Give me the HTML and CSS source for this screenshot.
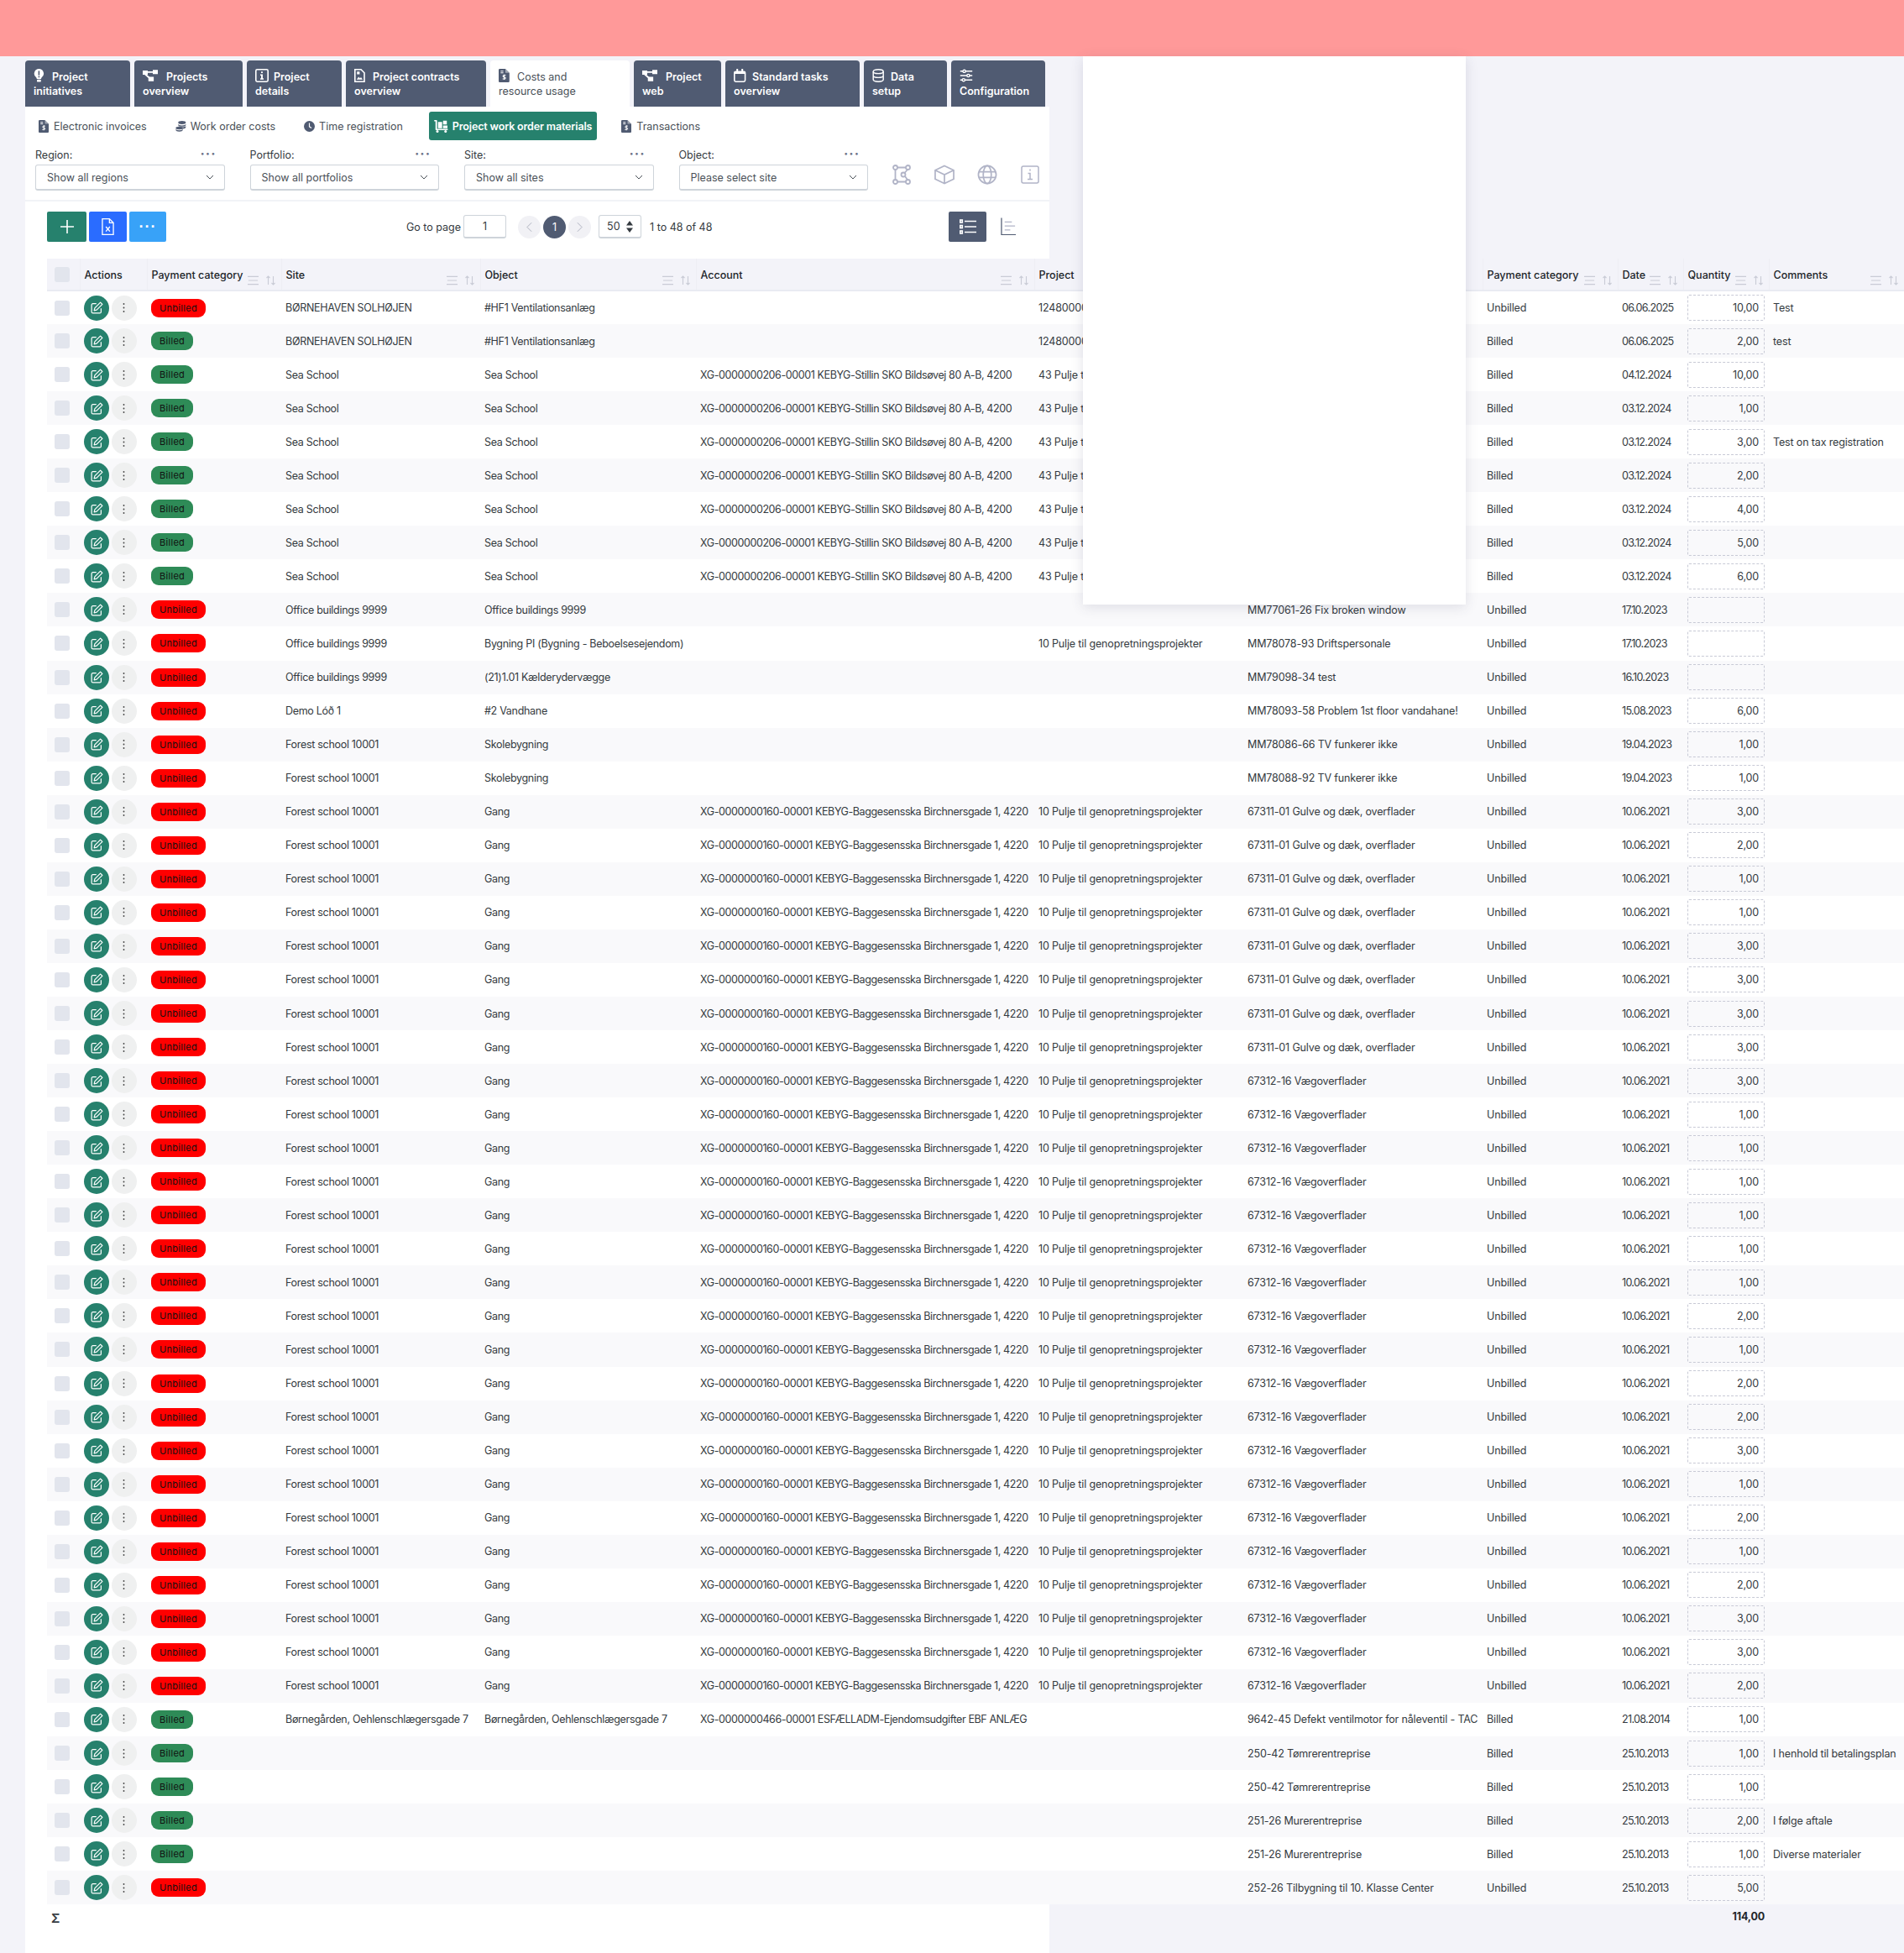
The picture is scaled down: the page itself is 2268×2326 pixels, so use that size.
FILE: index.html
```html
<!DOCTYPE html>
<html lang="en">
<head>
    <meta charset="UTF-8">
    <title>Project work order materials</title>
    <link rel="stylesheet" href="styles.css">
</head>
<body>
    <svg class="sprite" xmlns="http://www.w3.org/2000/svg">
        <symbol id="i-bulb" viewBox="0 0 16 20" preserveAspectRatio="xMinYMid"><path fill="currentColor" d="M8 0a7 7 0 0 0-4.600 12.300c.8.800 1.300 1.700 1.400 2.700h6.400c.1-1 .6-1.900 1.400-2.700A7 7 0 0 0 8 0z"/><rect x="5" y="16" width="6" height="3.500" rx="1.200" fill="currentColor"/><rect x="7" y="3" width="2" height="6.500" fill="#505b72"/><rect x="7" y="10.800" width="2" height="2" fill="#505b72"/></symbol>
        <symbol id="i-net" viewBox="0 0 24 18" preserveAspectRatio="xMinYMid"><path fill="currentColor" d="M0 1h8v6.500H0zM16 0h8v6.500h-8zM9 11h8.500v7H9z"/><path stroke="currentColor" stroke-width="2.400" fill="none" d="M8 3.500h8M4 7l7 6"/></symbol>
        <symbol id="i-info" viewBox="0 0 20 20" preserveAspectRatio="xMinYMid"><rect x="1" y="1" width="18" height="18" rx="2" fill="none" stroke="currentColor" stroke-width="2"/><path fill="currentColor" d="M8.800 4h2.400v2.400H8.800zM7.500 8h3.700v6h1.300v2h-5v-2h1.300v-4H7.500z"/></symbol>
        <symbol id="i-doc" viewBox="0 0 16 20" preserveAspectRatio="xMinYMid"><path d="M1 1h9l5 5v13H1z" fill="none" stroke="currentColor" stroke-width="2"/><path fill="currentColor" d="M4 4h4v4H4zM3.500 16l3-4 2 2 1.500-1.500 2.500 3.500z"/></symbol>
        <symbol id="i-invoice" viewBox="0 0 16 20" preserveAspectRatio="xMinYMid"><path fill="currentColor" d="M1.500 0H10l6 6v12.500a1.500 1.500 0 0 1-1.500 1.500h-13A1.500 1.500 0 0 1 0 18.500v-17A1.500 1.500 0 0 1 1.500 0z"/><path stroke="#fff" stroke-width="1.300" fill="none" d="M3 3.500h4M3 6h4M10.500 9.500H7.800a1.300 1.300 0 0 0 0 2.800h1a1.300 1.300 0 0 1 0 2.800H5.800M8.300 8.300v8"/><path fill="#fff" d="M10 0v6h6z" opacity=".45"/></symbol>
        <symbol id="i-cal" viewBox="0 0 18 20" preserveAspectRatio="xMinYMid"><rect x="1" y="4" width="16" height="15" rx="2" fill="none" stroke="currentColor" stroke-width="2"/><path fill="currentColor" d="M1 4h16v3.500H1zM4 0h2.500v5H4zM11.500 0H14v5h-2.500z"/></symbol>
        <symbol id="i-db" viewBox="0 0 18 20" preserveAspectRatio="xMinYMid" fill="none" stroke="currentColor" stroke-width="1.800"><ellipse cx="9" cy="4" rx="7.500" ry="3"/><path d="M1.500 4v12c0 1.700 3.400 3 7.500 3s7.500-1.300 7.500-3V4M1.500 10c0 1.700 3.400 3 7.500 3s7.500-1.300 7.500-3"/></symbol>
        <symbol id="i-sliders" viewBox="0 0 20 20" preserveAspectRatio="xMinYMid" fill="none" stroke="currentColor" stroke-width="1.800"><path d="M1 3.500h4M9 3.500h10M1 10h10M15 10h4M1 16.500h3M8 16.500h11"/><circle cx="7" cy="3.500" r="2"/><circle cx="13" cy="10" r="2"/><circle cx="6" cy="16.500" r="2"/></symbol>
        <symbol id="i-coins" viewBox="0 0 20 20"><g fill="currentColor"><ellipse cx="12" cy="3" rx="7" ry="3"/><path d="M5 5.500c0 1.700 3 3 7 3s7-1.300 7-3v2c0 1.700-3 3-7 3s-7-1.300-7-3zM5 9.500c1 .8 3 2 7 2s6-1.200 7-2v2c0 1.700-3 3-7 3s-4-.2-4-.2z"/><ellipse cx="7" cy="13" rx="6.500" ry="2.600"/><path d="M.5 14.500c0 1.500 3 2.700 6.500 2.700s6.500-1.200 6.500-2.700v2.200c0 1.700-3 3-6.500 3s-6.500-1.300-6.500-3z"/></g></symbol>
        <symbol id="i-clock" viewBox="0 0 20 20"><circle cx="10" cy="10" r="10" fill="currentColor"/><path d="M10 4v6.500l4 2.500" fill="none" stroke="#fff" stroke-width="1.800"/></symbol>
        <symbol id="i-dolly" viewBox="0 0 22 20"><g fill="currentColor"><path d="M0 0h3.500a1 1 0 0 1 1 1v13h17v2H3a1 1 0 0 1-1-1V2H0z"/><path d="M6 3h6.500v10H6zM14 1h6v6h-6zM14 8.500h7V13h-7z"/><circle cx="5" cy="18" r="2"/><circle cx="18" cy="18" r="2"/></g></symbol>
        <symbol id="i-edit" viewBox="0 0 20 20" fill="none" stroke="currentColor" stroke-width="1.600" stroke-linejoin="round"><path d="M9 3.500H3.500a2 2 0 0 0-2 2v11a2 2 0 0 0 2 2h11a2 2 0 0 0 2-2V11"/><path d="M15.500 1.500l3 3L9.500 13.500l-4 1 1-4z"/></symbol>
        <symbol id="i-chev" viewBox="0 0 10 6"><path d="M1 1l4 4 4-4" fill="none" stroke="currentColor" stroke-width="1"/></symbol>
        <symbol id="i-menu" viewBox="0 0 14 12"><path d="M0 1h14M1 6h12M0 11h14" stroke="currentColor" stroke-width="1.200"/></symbol>
        <symbol id="i-sort" viewBox="0 0 12 12"><path d="M3 11V1M1 3l2-2 2 2M9 1v10M7 9l2 2 2-2" fill="none" stroke="currentColor" stroke-width="1.100"/></symbol>
    </svg>

    <div class="topbar"></div>

    <div class="page">
        <nav class="tabs">
            <a class="tab"><svg class="tab-icon"><use href="#i-bulb"/></svg>Project<br>initiatives</a>
            <a class="tab"><svg class="tab-icon tab-icon-wide"><use href="#i-net"/></svg>Projects<br>overview</a>
            <a class="tab"><svg class="tab-icon"><use href="#i-info"/></svg>Project<br>details</a>
            <a class="tab"><svg class="tab-icon"><use href="#i-doc"/></svg>Project contracts<br>overview</a>
            <a class="tab tab-active"><svg class="tab-icon"><use href="#i-invoice"/></svg>Costs and<br>resource usage</a>
            <a class="tab"><svg class="tab-icon tab-icon-wide"><use href="#i-net"/></svg>Project<br>web</a>
            <a class="tab"><svg class="tab-icon"><use href="#i-cal"/></svg>Standard tasks<br>overview</a>
            <a class="tab"><svg class="tab-icon"><use href="#i-db"/></svg>Data<br>setup</a>
            <a class="tab"><svg class="tab-icon"><use href="#i-sliders"/></svg><br>Configuration</a>
        </nav>

        <main class="panel">
            <nav class="subtabs">
                <a class="subtab"><svg class="sub-icon"><use href="#i-invoice"/></svg>Electronic invoices</a>
                <a class="subtab"><svg class="sub-icon"><use href="#i-coins"/></svg>Work order costs</a>
                <a class="subtab"><svg class="sub-icon"><use href="#i-clock"/></svg>Time registration</a>
                <a class="subtab subtab-active"><svg class="sub-icon sub-icon-wide"><use href="#i-dolly"/></svg>Project work order materials</a>
                <a class="subtab"><svg class="sub-icon"><use href="#i-invoice"/></svg>Transactions</a>
            </nav>

            <section class="filters">
                <div class="filter">
                    <div class="filter-label"><span>Region:</span><span class="more">&middot;&middot;&middot;</span></div>
                    <div class="select"><span>Show all regions</span><svg class="chev"><use href="#i-chev"/></svg></div>
                </div>
                <div class="filter">
                    <div class="filter-label"><span>Portfolio:</span><span class="more">&middot;&middot;&middot;</span></div>
                    <div class="select"><span>Show all portfolios</span><svg class="chev"><use href="#i-chev"/></svg></div>
                </div>
                <div class="filter">
                    <div class="filter-label"><span>Site:</span><span class="more">&middot;&middot;&middot;</span></div>
                    <div class="select"><span>Show all sites</span><svg class="chev"><use href="#i-chev"/></svg></div>
                </div>
                <div class="filter">
                    <div class="filter-label"><span>Object:</span><span class="more">&middot;&middot;&middot;</span></div>
                    <div class="select"><span>Please select site</span><svg class="chev"><use href="#i-chev"/></svg></div>
                </div>
                <div class="view-icons">
                    <svg viewBox="0 0 22 24" fill="none" stroke="currentColor" stroke-width="1.800"><circle cx="3.500" cy="3.500" r="2.500"/><circle cx="18.500" cy="3.500" r="2.500"/><circle cx="3.500" cy="20.500" r="2.500"/><circle cx="18.500" cy="20.500" r="2.500"/><circle cx="13" cy="12" r="2.500"/><path d="M6 3.500h10M3.500 6v12M6 20.500h10M18 6l-3.500 4M15 14l3 4"/></svg>
                    <svg viewBox="0 0 25 24" fill="none" stroke="currentColor" stroke-width="1.800"><path d="M12.500 1L24 6.500v11L12.500 23 1 17.500v-11zM1 6.500l11.500 5.500L24 6.500M12.500 12v11"/></svg>
                    <svg viewBox="0 0 25 24" fill="none" stroke="currentColor" stroke-width="1.800"><circle cx="12.500" cy="12" r="11"/><ellipse cx="12.500" cy="12" rx="5" ry="11"/><path d="M2 8.500h21M2 15.500h21"/></svg>
                    <svg viewBox="0 0 22 24" fill="none" stroke="currentColor" stroke-width="1.500"><rect x="1" y="2" width="20" height="20" rx="2"/><path d="M11 5.500v2M8.500 10.500H11v7M8 17.500h6"/></svg>
                </div>
            </section>

            <section class="toolbar">
                <button class="tool-btn btn-add"><svg viewBox="0 0 16 16"><path d="M8 0v16M0 8h16" stroke="currentColor" stroke-width="1.600"/></svg></button>
                <button class="tool-btn btn-excel"><svg viewBox="0 0 16 22" fill="none" stroke="currentColor" stroke-width="1.400"><path d="M1 1h9l5 5v15H1zM10 1v5h5M5.500 11l5 6M10.500 11l-5 6"/></svg></button>
                <button class="tool-btn btn-more">&middot;&middot;&middot;</button>

                <div class="pager">
                    <span>Go to page</span>
                    <input class="page-input" type="text" value="1">
                    <span class="page-nav page-prev"><svg viewBox="0 0 8 14"><path d="M7 1L1 7l6 6" fill="none" stroke="currentColor"/></svg></span>
                    <span class="page-num">1</span>
                    <span class="page-nav"><svg viewBox="0 0 8 14"><path d="M1 1l6 6-6 6" fill="none" stroke="currentColor"/></svg></span>
                    <span class="page-size">50<svg viewBox="0 0 8 14"><path fill="currentColor" d="M4 0l4 5.500H0zM4 14L0 8.500h8z"/></svg></span>
                    <span class="page-count">1 to 48 of 48</span>
                </div>

                <div class="view-switch">
                    <button class="tool-btn btn-list"><svg viewBox="0 0 20 18" fill="none" stroke="currentColor" stroke-width="1.600"><path d="M6 2.500h14M6 9h14M6 15.500h14"/><rect x=".8" y="1" width="2.500" height="3"/><rect x=".8" y="7.500" width="2.500" height="3"/><rect x=".8" y="14" width="2.500" height="3"/></svg></button>
                    <svg class="chart-icon" viewBox="0 0 20 24" fill="none" stroke="currentColor" stroke-width="1.300"><path d="M1 1v21h18" stroke="#505b72"/><path d="M5 6h9M5 11h13M5 16h7"/></svg>
                </div>
            </section>

            <table class="grid">
                <colgroup>
                    <col class="c-check"><col class="c-actions"><col class="c-pay"><col class="c-site"><col class="c-object"><col class="c-account"><col class="c-project"><col class="c-wo"><col class="c-pay2"><col class="c-date"><col class="c-qty"><col class="c-comments">
                </colgroup>
                <thead id="grid-head"></thead>
                <tbody id="grid-body"></tbody>
                <tfoot>
                    <tr>
                        <td colspan="2" class="sum-mark">&Sigma;</td>
                        <td colspan="8"></td>
                        <td class="sum-total">114,00</td>
                        <td></td>
                    </tr>
                </tfoot>
            </table>
        </main>
    </div>

    <div class="dialog"></div>

    <script src="script.js"></script>
</body>
</html>
```

FILE: styles.css
```css
* {
    box-sizing: border-box;
}

html, body {
    height: 2326px;
}

body {
    margin: 0;
    overflow: hidden;
    background-color: #f3f3f9;
    font-family: Inter, "Noto Sans", sans-serif;
    font-size: 12.5px;
    color: #343a40;
}

.sprite {
    display: none;
}

.topbar {
    height: 67px;
    background-color: #ff9999;
}

.page {
    width: 1220px;
    height: 2259px;
    margin-left: 30px;
    padding-top: 5px;
    display: flex;
    flex-direction: column;
}

/* top tabs */
.tabs {
    display: grid;
    grid-template-columns: 125px 129px 113px 167px 166px 104px 160px 99px 112px;
    column-gap: 5px;
    height: 55px;
}

.tab {
    padding: 10px 10px 0;
    border-radius: 4px 4px 0 0;
    background-color: #505b72;
    color: #fff;
    font-weight: 600;
    line-height: 17px;
    white-space: nowrap;
}

.tab-active {
    background-color: #fff;
    color: #495057;
    font-weight: 400;
}

.tab-icon {
    width: 16px;
    height: 16px;
    margin-right: 6px;
    vertical-align: -2px;
}

.tab-icon-wide {
    width: 18px;
    margin-right: 10px;
}

.tab-active .tab-icon {
    color: #505b72;
}

.panel {
    flex: 1;
    background-color: #fff;
}

/* second row of tabs */
.subtabs {
    display: flex;
    gap: 22px;
    height: 34px;
    margin-top: 6px;
    padding-left: 10px;
}

.subtab {
    display: flex;
    align-items: center;
    gap: 5px;
    padding: 0 6px;
    border-radius: 3px;
    color: #495057;
    white-space: nowrap;
}

.subtab-active {
    margin: 0 1px 0 3px;
    background-color: #26816d;
    color: #fff;
    font-weight: 600;
    letter-spacing: -.15px;
}

.sub-icon {
    width: 13px;
    height: 15px;
    color: #505b72;
}

.sub-icon-wide {
    width: 17px;
    color: #fff;
}

/* filters */
.filters {
    display: flex;
    gap: 30px;
    height: 73px;
    padding: 8px 0 0 12px;
    border-bottom: 2px solid #f1f3f7;
}

.filter {
    width: 225.500px;
}

.filter-label {
    display: flex;
    justify-content: space-between;
    height: 21px;
    padding: 1px 10px 0 0;
    line-height: 18px;
    color: #343a40;
}

.more {
    font-size: 16px;
    font-weight: 700;
    line-height: 14px;
    letter-spacing: 1px;
    color: #6c7287;
}

.select {
    display: flex;
    align-items: center;
    justify-content: space-between;
    height: 31px;
    padding: 0 12px 0 13px;
    border: 1px solid #ced4da;
    border-bottom-width: 2px;
    border-radius: 3px;
    color: #495057;
}

.chev {
    width: 10px;
    height: 6px;
}

.view-icons {
    display: flex;
    gap: 27px;
    margin-left: -2px;
    padding-top: 21px;
    color: #b1b4c7;
}

.view-icons svg {
    width: 24px;
    height: 24px;
}

/* toolbar with pager */
.toolbar {
    display: flex;
    align-items: center;
    gap: 3px;
    height: 36px;
    margin: 12px 0 20px;
    padding: 0 39px 0 26px;
}

.tool-btn {
    display: flex;
    align-items: center;
    justify-content: center;
    height: 36px;
    padding: 0;
    border: none;
    border-radius: 2px;
    color: #fff;
}

.btn-add {
    width: 47px;
    background-color: #26816d;
}

.btn-add svg {
    width: 16px;
    height: 16px;
}

.btn-excel {
    width: 45px;
    background-color: #2a6cff;
}

.btn-excel svg {
    width: 15px;
    height: 22px;
}

.btn-more {
    width: 44px;
    background-color: #38a2f8;
    font-size: 18px;
    font-weight: 700;
    letter-spacing: 1px;
}

.pager {
    display: flex;
    align-items: center;
    gap: 3px;
    margin-left: 283px;
}

.page-input {
    width: 51px;
    height: 28px;
    border: 1px solid #ced4da;
    border-bottom-width: 2px;
    border-radius: 3px;
    font: inherit;
    color: #343a40;
    text-align: center;
}

.page-nav, .page-num {
    display: flex;
    align-items: center;
    justify-content: center;
    width: 27px;
    height: 27px;
    border-radius: 50%;
}

.page-nav {
    background-color: #f1f1f5;
    color: #a6a9b8;
}

.page-prev {
    margin-left: 11px;
}

.page-nav svg {
    width: 7px;
    height: 13px;
}

.page-num {
    background-color: #505b72;
    color: #fff;
}

.page-size {
    display: flex;
    align-items: center;
    justify-content: space-between;
    width: 51px;
    height: 28px;
    margin-left: 6px;
    padding: 0 9px;
    border: 1px solid #ced4da;
    border-bottom-width: 2px;
    border-radius: 3px;
}

.page-size svg {
    width: 8px;
    height: 14px;
}

.page-count {
    margin-left: 7px;
}

.view-switch {
    display: flex;
    align-items: center;
    gap: 17px;
    margin-left: auto;
}

.btn-list {
    width: 45px;
    background-color: #505b72;
}

.btn-list svg {
    width: 20px;
    height: 18px;
}

.chart-icon {
    width: 19px;
    height: 24px;
    color: #b1b4c7;
}

/* table */
.grid {
    table-layout: fixed;
    width: 2212px;
    margin-left: 26px;
    border-collapse: collapse;
}

.c-check { width: 39px; }
.c-actions { width: 80px; }
.c-pay { width: 160px; }
.c-site { width: 237px; }
.c-object { width: 257px; }
.c-account { width: 403px; }
.c-project { width: 249px; }
.c-wo { width: 285px; }
.c-pay2 { width: 161px; }
.c-date { width: 78px; }
.c-qty { width: 102px; }
.c-comments { width: 161px; }

.grid th {
    height: 38px;
    padding: 0;
    border-right: 1px solid #eeeef4;
    border-bottom: 2px solid #e9ebf2;
    background-color: #f3f3f9;
    font-weight: 500;
    color: #212529;
    text-align: left;
}

.th-inner {
    display: flex;
    justify-content: space-between;
    height: 36px;
    padding: 10px 6px 0 5px;
    line-height: 17px;
    white-space: nowrap;
}

.th-icons {
    display: flex;
    gap: 8px;
    padding-top: 9px;
    color: #c9cbd6;
}

.th-icons svg {
    width: 13px;
    height: 12px;
}

.grid td {
    height: 40.060px;
    padding: 0 5px;
    overflow: hidden;
    white-space: nowrap;
    letter-spacing: -.15px;
    background-color: #fff;
}

.grid tbody tr:nth-child(even) td {
    background-color: #f9f9fb;
}

.grid .check-cell {
    padding: 0 3px 0 0;
    text-align: center;
}

.check {
    display: inline-block;
    width: 18px;
    height: 18px;
    border-radius: 3px;
    background-color: #e2e5ed;
    vertical-align: middle;
}

.grid .cell-site {
    letter-spacing: -.3px;
}

.grid .cell-account {
    letter-spacing: -.4px;
}

.grid .cell-date {
    letter-spacing: -.65px;
}

.actions {
    display: flex;
    gap: 2.500px;
}

.act-edit, .act-more {
    display: flex;
    align-items: center;
    justify-content: center;
    width: 30px;
    height: 30px;
    border-radius: 50%;
}

.act-edit {
    background-color: #26816d;
    color: #fff;
}

.act-edit svg {
    width: 15px;
    height: 15px;
}

.act-more {
    background-color: #eff0f0;
}

.act-more svg {
    width: 3px;
    height: 11px;
}

.pill {
    display: inline-block;
    height: 22px;
    padding: 0 10px;
    border-radius: 9px;
    font-size: 11px;
    line-height: 22px;
    letter-spacing: .3px;
    color: #111;
}

.pill-unbilled {
    background-color: #ff0000;
}

.pill-billed {
    background-color: #2e8b57;
}

.qty {
    height: 31px;
    padding-right: 6px;
    border: 1px dashed #c8cad6;
    border-radius: 2px;
    line-height: 29px;
    text-align: right;
}

.grid tfoot td {
    height: 56px;
    padding-top: 7px;
    vertical-align: top;
    background: transparent;
}

.grid .sum-mark {
    font-size: 15px;
    font-weight: 600;
    color: #343a40;
}

.grid .sum-total {
    font-weight: 700;
    color: #212529;
    text-align: right;
}

/* white dialog lying over the table */
.dialog {
    position: absolute;
    left: 1290px;
    top: 67px;
    width: 456px;
    height: 653px;
    background-color: #fff;
    box-shadow: 0 3px 14px rgba(60, 60, 90, .14);
}
```

FILE: script.js
```js
const head = ['', 'Actions', 'Payment category', 'Site', 'Object', 'Account', 'Project', '', 'Payment category', 'Date', 'Quantity', 'Comments'];
const noIcons = ['', 'Actions'];

const SEA_ACCOUNT = 'XG-0000000206-00001 KEBYG-Stillin SKO Bildsøvej 80 A-B, 4200';
const GANG_ACCOUNT = 'XG-0000000160-00001 KEBYG-Baggesensska Birchnersgade 1, 4220';
const PULJE = '10 Pulje til genopretningsprojekter';
const PULJE_43 = '43 Pulje til genopretningsprojekter';
const FOREST = 'Forest school 10001';
const BORNE = 'Børnegården, Oehlenschlægersgade 7';

// pay, site, object, account, project, work order, date, quantity, comment
const rows = [
    ['Unbilled', 'BØRNEHAVEN SOLHØJEN', '#HF1 Ventilationsanlæg', '', '12480000', '', '06.06.2025', '10,00', 'Test'],
    ['Billed', 'BØRNEHAVEN SOLHØJEN', '#HF1 Ventilationsanlæg', '', '12480000', '', '06.06.2025', '2,00', 'test'],
    ['Billed', 'Sea School', 'Sea School', SEA_ACCOUNT, PULJE_43, '', '04.12.2024', '10,00', ''],
    ['Billed', 'Sea School', 'Sea School', SEA_ACCOUNT, PULJE_43, '', '03.12.2024', '1,00', ''],
    ['Billed', 'Sea School', 'Sea School', SEA_ACCOUNT, PULJE_43, '', '03.12.2024', '3,00', 'Test on tax registration'],
    ['Billed', 'Sea School', 'Sea School', SEA_ACCOUNT, PULJE_43, '', '03.12.2024', '2,00', ''],
    ['Billed', 'Sea School', 'Sea School', SEA_ACCOUNT, PULJE_43, '', '03.12.2024', '4,00', ''],
    ['Billed', 'Sea School', 'Sea School', SEA_ACCOUNT, PULJE_43, '', '03.12.2024', '5,00', ''],
    ['Billed', 'Sea School', 'Sea School', SEA_ACCOUNT, PULJE_43, '', '03.12.2024', '6,00', ''],
    ['Unbilled', 'Office buildings 9999', 'Office buildings 9999', '', '', 'MM77061-26 Fix broken window', '17.10.2023', '', ''],
    ['Unbilled', 'Office buildings 9999', 'Bygning PI (Bygning - Beboelsesejendom)', '', PULJE, 'MM78078-93 Driftspersonale', '17.10.2023', '', ''],
    ['Unbilled', 'Office buildings 9999', '(21)1.01 Kælderydervægge', '', '', 'MM79098-34 test', '16.10.2023', '', ''],
    ['Unbilled', 'Demo Lóð 1', '#2 Vandhane', '', '', 'MM78093-58 Problem 1st floor vandahane!', '15.08.2023', '6,00', ''],
    ['Unbilled', FOREST, 'Skolebygning', '', '', 'MM78086-66 TV funkerer ikke', '19.04.2023', '1,00', ''],
    ['Unbilled', FOREST, 'Skolebygning', '', '', 'MM78088-92 TV funkerer ikke', '19.04.2023', '1,00', '']
];

['3,00', '2,00', '1,00', '1,00', '3,00', '3,00', '3,00', '3,00'].forEach(qty => {
    rows.push(['Unbilled', FOREST, 'Gang', GANG_ACCOUNT, PULJE, '67311-01 Gulve og dæk, overflader', '10.06.2021', qty, '']);
});

['3,00', '1,00', '1,00', '1,00', '1,00', '1,00', '1,00', '2,00', '1,00', '2,00', '2,00', '3,00', '1,00', '2,00', '1,00', '2,00', '3,00', '3,00', '2,00'].forEach(qty => {
    rows.push(['Unbilled', FOREST, 'Gang', GANG_ACCOUNT, PULJE, '67312-16 Vægoverflader', '10.06.2021', qty, '']);
});

rows.push(
    ['Billed', BORNE, BORNE, 'XG-0000000466-00001 ESFÆLLADM-Ejendomsudgifter EBF ANLÆG', '', '9642-45 Defekt ventilmotor for nåleventil - TAC', '21.08.2014', '1,00', ''],
    ['Billed', '', '', '', '', '250-42 Tømrerentreprise', '25.10.2013', '1,00', 'I henhold til betalingsplan'],
    ['Billed', '', '', '', '', '250-42 Tømrerentreprise', '25.10.2013', '1,00', ''],
    ['Billed', '', '', '', '', '251-26 Murerentreprise', '25.10.2013', '2,00', 'I følge aftale'],
    ['Billed', '', '', '', '', '251-26 Murerentreprise', '25.10.2013', '1,00', 'Diverse materialer'],
    ['Unbilled', '', '', '', '', '252-26 Tilbygning til 10. Klasse Center', '25.10.2013', '5,00', '']
);

function headCell(title, index) {
    if (index === 0) {
        return '<th class="check-cell"><span class="check"></span></th>';
    }
    const icons = noIcons.includes(title) ? '' :
        '<span class="th-icons"><svg><use href="#i-menu"/></svg><svg><use href="#i-sort"/></svg></span>';
    return `<th><div class="th-inner"><span>${title}</span>${icons}</div></th>`;
}

function bodyRow(r) {
    const [pay, site, object, account, project, workOrder, date, qty, comment] = r;
    return `<tr>
        <td class="check-cell"><span class="check"></span></td>
        <td><div class="actions"><span class="act-edit"><svg><use href="#i-edit"/></svg></span><span class="act-more"><svg viewBox="0 0 3 11"><g fill="#444"><circle cx="1.500" cy="1" r=".9"/><circle cx="1.500" cy="5.500" r=".9"/><circle cx="1.500" cy="10" r=".9"/></g></svg></span></div></td>
        <td><span class="pill pill-${pay.toLowerCase()}">${pay}</span></td>
        <td class="cell-site">${site}</td><td class="cell-site">${object}</td><td class="cell-account">${account}</td><td>${project}</td><td>${workOrder}</td>
        <td>${pay}</td><td class="cell-date">${date}</td>
        <td><div class="qty">${qty}</div></td>
        <td>${comment}</td>
    </tr>`;
}

document.getElementById('grid-head').innerHTML = '<tr>' + head.map(headCell).join('') + '</tr>';
document.getElementById('grid-body').innerHTML = rows.map(bodyRow).join('');
```
